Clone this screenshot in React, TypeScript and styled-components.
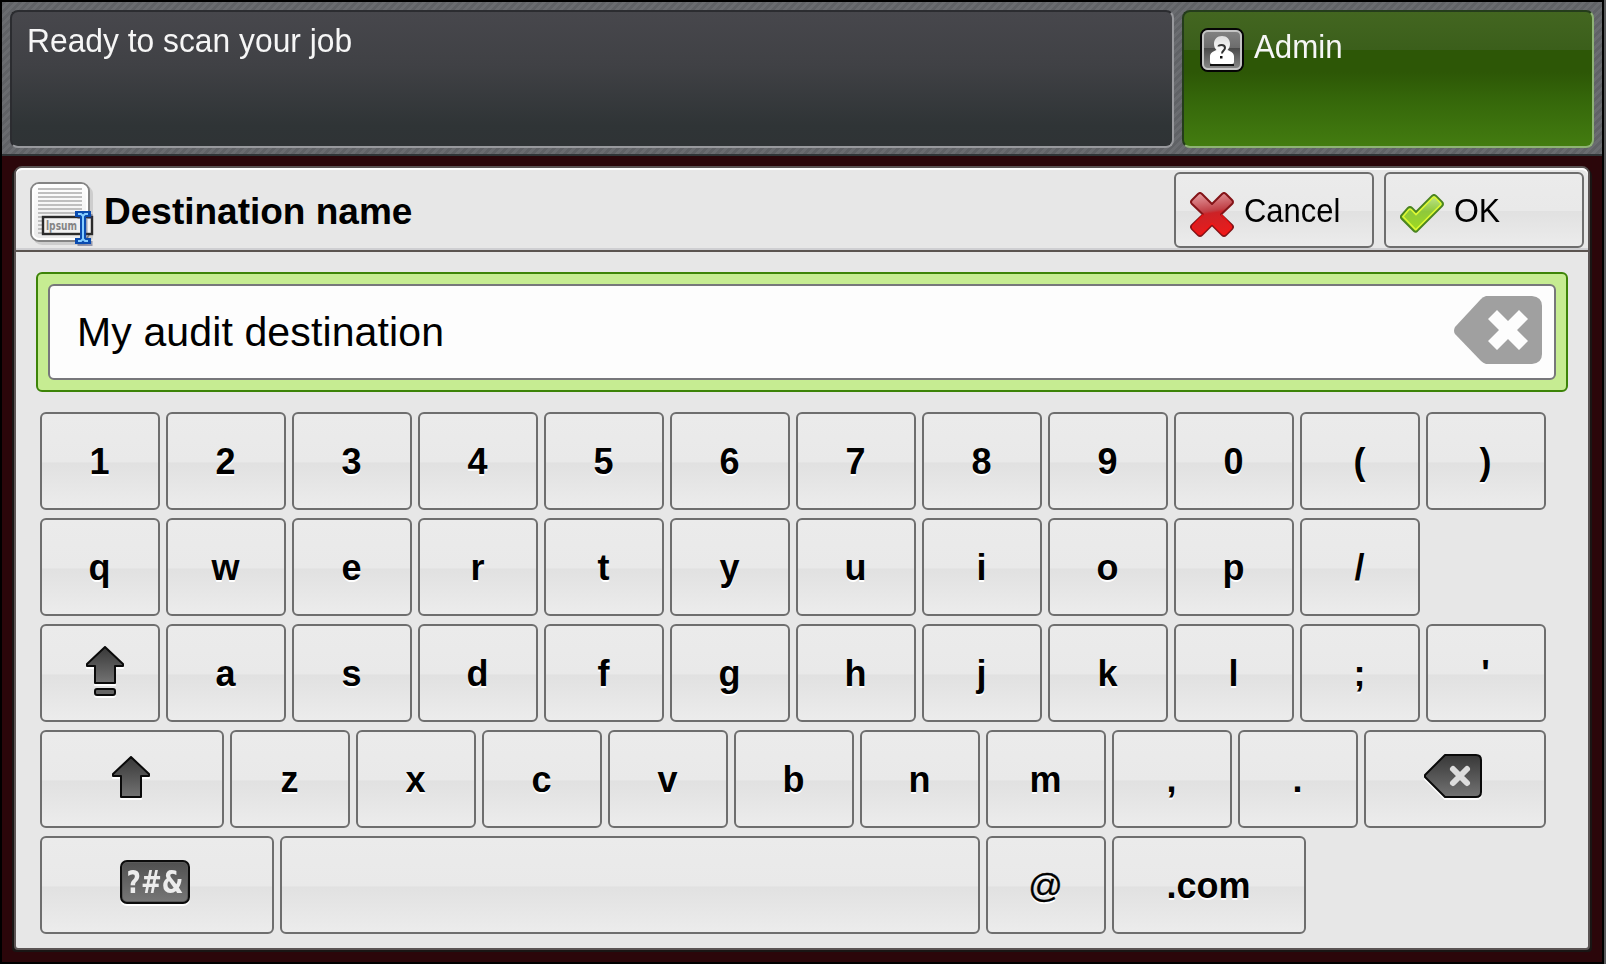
import React from "react";
import styled, { createGlobalStyle, css } from "styled-components";

const GlobalStyle = createGlobalStyle`
  *, *::before, *::after { box-sizing: border-box; }
  body { margin: 0; background: #000; }
  button { font: inherit; margin: 0; padding: 0; }
`;

const Frame = styled.div`
  display: flex;
  flex-direction: column;
  width: 1606px;
  height: 964px;
  padding: 2px;
  background: #000;
  border-right: 2px solid #58595b;
  overflow: hidden;
  font-family: "Liberation Sans", Arial, sans-serif;
`;

const StatusBar = styled.header`
  display: flex;
  gap: 8px;
  flex: none;
  height: 154px;
  padding: 8px;
  border-bottom: 2px solid #2f3436;
  background: repeating-linear-gradient(135deg, #606266 0 2.83px, #6a6c70 2.83px 5.657px);
`;

const StatusPanel = styled.div`
  display: flex;
  align-items: flex-start;
  width: 1164px;
  height: 138px;
  padding: 8px 0 0 15px;
  border: 2px solid;
  border-color: #2b2c30 #98999d #98999d #2b2c30;
  border-radius: 8px;
  background: linear-gradient(#47474c, #404145 40%, #2f3436 85%, #2f3335);
`;

const UserPanel = styled.div`
  display: flex;
  align-items: flex-start;
  width: 412px;
  height: 138px;
  padding: 16px 0 0 16px;
  border: 2px solid;
  border-color: #243c1b #8fb375 #8fb375 #243c1b;
  border-radius: 8px;
  background: linear-gradient(#436620, #3b5f1b 28%, #2d5706 28.5%, #2d5706 45%, #35670a 65%, #437c10 100%);
`;

const Label = styled.span<{ $size: number; $stretch?: number; $spacing?: number; $bold?: boolean; $color?: string }>`
  font-size: ${(p) => p.$size}px;
  line-height: 40px;
  letter-spacing: ${(p) => p.$spacing ?? 0}px;
  font-weight: ${(p) => (p.$bold ? 700 : 400)};
  color: ${(p) => p.$color ?? "#000"};
  white-space: pre;
  ${(p) => p.$stretch && css`
    transform: scaleX(${p.$stretch});
    transform-origin: left;
  `}
`;

const UserName = styled(Label)`
  margin: -2px 0 0 10px;
`;

const Stage = styled.main`
  flex: 1;
  padding: 10px 12px;
  background: #2b060a;
`;

const Dialog = styled.section`
  width: 1576px;
  height: 784px;
  border: 2px solid #5b5454;
  border-radius: 8px 8px 4px 4px;
  background: #e7e7e7;
  box-shadow: -2px 2px 0 #191514, 2px 2px 0 #191514;
`;

const TitleBar = styled.div`
  display: flex;
  align-items: flex-start;
  height: 84px;
  padding: 4px 4px 0 14px;
  border-bottom: 2px solid #5b5450;
  border-radius: 6px 6px 0 0;
  box-shadow: inset 0 2px #fff, inset 0 -2px #cfcfd2;
`;

const TitleIcon = styled.div`
  display: flex;
  margin-top: 10px;
`;

const Title = styled(Label).attrs({ as: "h1" })`
  flex: 1;
  margin: 20px 0 0 8px;
`;

const keyFace = css`
  border: 2px solid #6e6e6e;
  border-radius: 6px;
  background: linear-gradient(#ebebeb, #e9e9e9 51%, #e1e1e1 52%, #e5e5e5 70%, #ececec 100%);
`;

const ActionButton = styled.button`
  ${keyFace}
  display: flex;
  align-items: flex-start;
  width: 200px;
  height: 76px;
  padding: 16px 0 0 14px;
  & + & { margin-left: 10px; }
`;

const ActionIcon = styled.div<{ $drop: number }>`
  display: flex;
  margin-top: ${(p) => p.$drop}px;
`;

const ActionLabel = styled(Label)`
  margin: 0 0 0 10px;
`;

const FieldFrame = styled.div`
  width: 1532px;
  height: 120px;
  margin: 20px 0 20px 20px;
  padding: 10px;
  border: 2px solid #3d8408;
  border-radius: 6px;
  background: #c6ec92;
`;

const Field = styled.div`
  display: flex;
  justify-content: space-between;
  height: 96px;
  padding: 10px 12px 0 27px;
  border: 2px solid #77777b;
  border-radius: 6px;
  background: #fdfdfd;
`;

const FieldText = styled(Label)`
  margin-top: 16px;
`;

const Keyboard = styled.div`
  display: flex;
  flex-direction: column;
  gap: 8px;
  padding-left: 24px;
`;

const KeyRow = styled.div`
  display: flex;
  gap: 6px;
`;

const Key = styled.button<{ $width?: number }>`
  ${keyFace}
  display: flex;
  justify-content: center;
  align-items: flex-start;
  width: ${(p) => p.$width ?? 120}px;
  height: 98px;
  text-shadow: 0 2px 0 #fff;
`;

const KeyLabel = styled(Label)`
  margin: 28px 1px 0 0;
`;

const AtLabel = styled(KeyLabel)`
  margin-top: 27px;
  -webkit-text-stroke: 0.3px #000;
`;

const KeyIcon = styled.div<{ $top: number; $shift?: number }>`
  display: flex;
  margin: ${(p) => p.$top}px 0 0 ${(p) => p.$shift ?? 0}px;
  filter: drop-shadow(0 2px 0 #fff);
`;

const SymbolBadge = styled.div`
  display: flex;
  align-items: center;
  justify-content: center;
  width: 70px;
  height: 44px;
  margin: 22px 0 0 -4px;
  border: 2px solid #0c0c0c;
  border-radius: 7px;
  background: linear-gradient(#505050, #777);
  box-shadow: inset 0 0 0 1px #5a5a5a, 0 2px 0 #fff;
  color: #ececec;
  font: 700 32px/40px "DejaVu Sans Condensed", "DejaVu Sans", sans-serif;
  text-shadow: none;
`;

const SymbolText = styled.span`
  transform: scaleX(0.86);
`;

const DocumentIcon = () => (
  <svg width="66" height="66" viewBox="0 0 66 66">
    <defs>
      <linearGradient id="doc" x1="0" y1="0" x2="0" y2="1">
        <stop offset="0" stopColor="#fff" />
        <stop offset="1" stopColor="#e9e9e9" />
      </linearGradient>
    </defs>
    <rect x="3" y="3" width="60" height="60" rx="9" fill="#bdbdbd" opacity=".6" />
    <rect x="1" y="1" width="58" height="58" rx="8" fill="url(#doc)" stroke="#858585" strokeWidth="2" />
    <rect x="3" y="3" width="54" height="54" rx="6" fill="none" stroke="#fff" strokeWidth="2" />
    {[6, 10, 14, 18, 22, 26, 30, 34, 38, 42, 46, 50].map((y) => (
      <rect key={y} x="8" y={y} width="44" height="2" fill="#bfbfbf" />
    ))}
    <rect x="13" y="35" width="49" height="17" fill="#f1f1f1" stroke="#2b2b2b" strokeWidth="2.4" />
    <text x="16" y="48" fontSize="12" fontFamily="DejaVu Sans" fontWeight="700" fill="#858585" textLength="31" lengthAdjust="spacingAndGlyphs">lpsum</text>
    <path d="M48 33H58M48 60H58M53 33V60" stroke="#333a66" opacity=".45" strokeWidth="5" strokeLinecap="square" transform="translate(2 1.5)" />
    <path d="M48 32H58M48 59H58M53 32V59" stroke="#0a4bb0" strokeWidth="6" strokeLinecap="square" fill="none" />
    <path d="M48 32H51L53 34L55 32H58M48 59H51L53 57L55 59H58M53 34V57" stroke="#86cdff" strokeWidth="2" fill="none" />
  </svg>
);

const UserIcon = () => (
  <svg width="44" height="44" viewBox="0 0 44 44">
    <defs>
      <linearGradient id="usr" x1="0" y1="0" x2="0" y2="1">
        <stop offset="0" stopColor="#858585" />
        <stop offset=".45" stopColor="#6c6c6c" />
        <stop offset=".46" stopColor="#4a4a4a" />
        <stop offset="1" stopColor="#909090" />
      </linearGradient>
      <linearGradient id="bust" x1="0" y1="0" x2="0" y2="1">
        <stop offset="0" stopColor="#ddd" />
        <stop offset=".6" stopColor="#fff" />
      </linearGradient>
    </defs>
    <rect x="1" y="1" width="42" height="42" rx="7" fill="url(#usr)" stroke="#050505" strokeWidth="2" />
    <rect x="3" y="3" width="38" height="38" rx="5" fill="none" stroke="#c4c4c4" strokeWidth="2" />
    <path d="M10 37H34" stroke="#111" strokeWidth="2" />
    <path d="M22 8C27 8 30 11.500 30 16C30 18.500 29 20.500 27.500 22C31 23.500 34 25 34 28.500V34Q34 36 32 36H12Q10 36 10 34V28.500C10 25 13 23.500 16.500 22C15 20.500 14 18.500 14 16C14 11.500 17 8 22 8Z" fill="url(#bust)" />
    <path d="M18.500 18.500Q18.500 17 21.500 17Q25 17 25 20C25 22.500 22 22.500 22 25.500" fill="none" stroke="#333" strokeWidth="2" />
    <rect x="20" y="28" width="2.500" height="2.500" fill="#111" />
  </svg>
);

const CancelIcon = () => (
  <svg width="44" height="46" viewBox="0 0 44 46">
    <defs>
      <linearGradient id="red" x1="0" y1="0" x2=".15" y2="1">
        <stop offset="0" stopColor="#e8a4a8" />
        <stop offset=".47" stopColor="#c04046" />
        <stop offset=".53" stopColor="#cc2226" />
        <stop offset="1" stopColor="#e81c1c" />
      </linearGradient>
    </defs>
    <path d="M8 2Q10 0 12 2L22 12L32 2Q34 0 36 2L42 8Q44 10 42 12L31 22.500L42 33Q44 35 42 37L36 43Q34 45 32 43L22 33L12 43Q10 45 8 43L2 37Q0 35 2 33L13 22.500L2 12Q0 10 2 8Z" fill="url(#red)" stroke="#841418" strokeWidth="2" strokeLinejoin="round" />
    <path d="M31 22.500L41 33.500Q42 35 41 36.500L35.500 42Q34 43 32.500 42L22 31.500L11.500 42Q10 43 8.500 42L3 36.500Q2 35 3 33.500L13.500 22.500" fill="none" stroke="#ff1414" strokeOpacity=".8" strokeWidth="1.500" />
  </svg>
);

const CheckIcon = () => (
  <svg width="44" height="40" viewBox="0 0 44 40">
    <defs>
      <linearGradient id="grn" x1="0" y1="0" x2="0" y2="1">
        <stop offset="0" stopColor="#c2e690" />
        <stop offset=".45" stopColor="#8fc83c" />
        <stop offset="1" stopColor="#a0dc1c" />
      </linearGradient>
    </defs>
    <path d="M1 22L8 14Q10 12 12 14L16 18L32 2Q34 0 36 2L42 8Q44 10 42 12L18 36Q16 39 14 37L2 25Q0 23 1 22Z" fill="url(#grn)" stroke="#4a8420" strokeWidth="2" strokeLinejoin="round" />
    <path d="M3 22.500L9 15.500Q10 15 11 15.500L16 20.500L33 3.500Q34 3 35 3.500L40.500 9Q41 10 40.500 11L17 34.500Q16 36 15 35Z" fill="none" stroke="#dcf832" strokeWidth="1.600" />
  </svg>
);

const ClearIcon = () => (
  <svg width="88" height="68" viewBox="0 0 88 68">
    <path d="M32 0H78Q88 1 88 10V58Q88 67 78 68H32Q29 67 27 65L1 38Q-1 35 1 31L27 3Q29 1 32 0Z" fill="#a0a0a0" />
    <path d="M43 14L54 25L65 14L74 23L63 34L74 45L65 54L54 43L43 54L34 45L45 34L34 23Z" fill="#fdfdfd" />
  </svg>
);

const ArrowGradient = ({ id }: { id: string }) => (
  <defs>
    <linearGradient id={id} x1="0" y1="0" x2="0" y2="1">
      <stop offset="0" stopColor="#383838" />
      <stop offset="1" stopColor="#737373" />
    </linearGradient>
  </defs>
);

const CapsLockIcon = () => (
  <svg width="38" height="50" viewBox="0 0 38 50">
    <ArrowGradient id="caps" />
    <path d="M19 1L37 18V20H29V37H9V20H1V18Z" fill="url(#caps)" stroke="#0a0a0a" strokeWidth="2" strokeLinejoin="round" />
    <rect x="9" y="43" width="20" height="6" rx="2" fill="#666" stroke="#0a0a0a" strokeWidth="2" />
  </svg>
);

const ShiftIcon = () => (
  <svg width="38" height="42" viewBox="0 0 38 42">
    <ArrowGradient id="shift" />
    <path d="M19 1L37 18V20H29V41H9V20H1V18Z" fill="url(#shift)" stroke="#0a0a0a" strokeWidth="2" strokeLinejoin="round" />
  </svg>
);

const BackspaceIcon = () => (
  <svg width="58" height="44" viewBox="0 0 58 44">
    <ArrowGradient id="back" />
    <path d="M21 1H52Q57 1 57 6V38Q57 43 52 43H21L1 23V21Z" fill="url(#back)" stroke="#0a0a0a" strokeWidth="2" strokeLinejoin="round" />
    <path d="M29 15L43 29M43 15L29 29" stroke="#dcdcdc" strokeWidth="6" strokeLinecap="round" />
  </svg>
);

const LetterKey = ({ value, width }: { value: string; width?: number }) => (
  <Key $width={width}>
    {value === "@" ? (
      <AtLabel $size={34}>@</AtLabel>
    ) : (
      <KeyLabel $size={36} $bold>{value}</KeyLabel>
    )}
  </Key>
);

const letters = (chars: string) => chars.split("").map((c) => <LetterKey key={c} value={c} />);

export default function App() {
  return (
    <>
      <GlobalStyle />
      <Frame>
        <StatusBar>
          <StatusPanel>
            <Label $size={34} $stretch={0.935} $color="#f6f6f6">Ready to scan your job</Label>
          </StatusPanel>
          <UserPanel>
            <UserIcon />
            <UserName $size={34} $stretch={0.92} $color="#f6f6f6">Admin</UserName>
          </UserPanel>
        </StatusBar>
        <Stage>
          <Dialog>
            <TitleBar>
              <TitleIcon><DocumentIcon /></TitleIcon>
              <Title $size={37} $bold>Destination name</Title>
              <ActionButton>
                <ActionIcon $drop={2}><CancelIcon /></ActionIcon>
                <ActionLabel $size={34} $stretch={0.91}>Cancel</ActionLabel>
              </ActionButton>
              <ActionButton>
                <ActionIcon $drop={4}><CheckIcon /></ActionIcon>
                <ActionLabel $size={34} $stretch={0.94}>OK</ActionLabel>
              </ActionButton>
            </TitleBar>
            <FieldFrame>
              <Field>
                <FieldText $size={41} $spacing={0.12}>My audit destination</FieldText>
                <ClearIcon />
              </Field>
            </FieldFrame>
            <Keyboard>
              <KeyRow>{letters("1234567890()")}</KeyRow>
              <KeyRow>{letters("qwertyuiop/")}</KeyRow>
              <KeyRow>
                <Key><KeyIcon $top={20} $shift={10}><CapsLockIcon /></KeyIcon></Key>
                {letters("asdfghjkl;'")}
              </KeyRow>
              <KeyRow>
                <Key $width={184}><KeyIcon $top={24} $shift={-2}><ShiftIcon /></KeyIcon></Key>
                {letters("zxcvbnm,.")}
                <Key $width={182}><KeyIcon $top={22} $shift={-4}><BackspaceIcon /></KeyIcon></Key>
              </KeyRow>
              <KeyRow>
                <Key $width={234}><SymbolBadge><SymbolText>?#&amp;</SymbolText></SymbolBadge></Key>
                <Key $width={700} />
                <LetterKey value="@" />
                <LetterKey value=".com" width={194} />
              </KeyRow>
            </Keyboard>
          </Dialog>
        </Stage>
      </Frame>
    </>
  );
}
